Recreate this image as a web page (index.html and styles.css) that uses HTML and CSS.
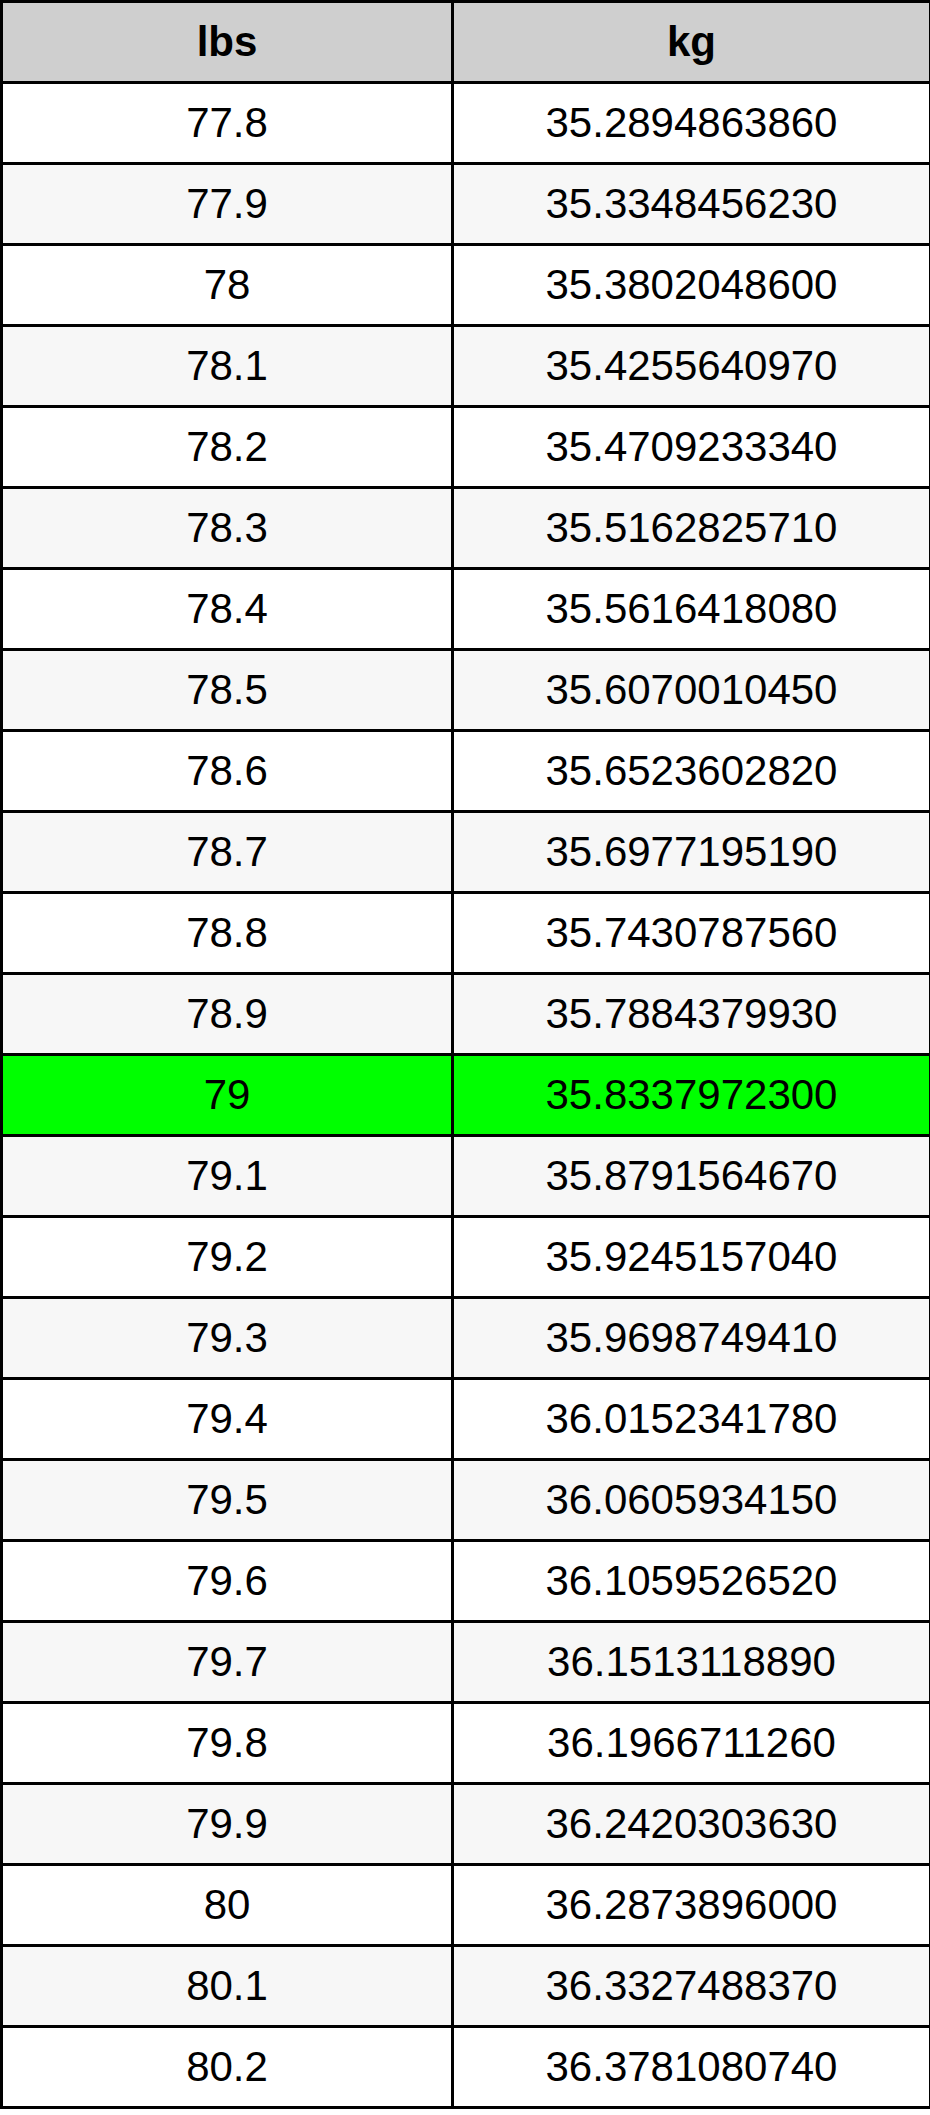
FILE: index.html
```html
<!DOCTYPE html>
<html>
<head>
<meta charset="utf-8">
<link rel="stylesheet" href="styles.css">
</head>
<body>
<table class="conv">
<colgroup><col class="c1"><col class="c2"></colgroup>
<thead>
<tr><th>lbs</th><th>kg</th></tr>
</thead>
<tbody>
<tr><td>77.8</td><td>35.2894863860</td></tr>
<tr class="alt"><td>77.9</td><td>35.3348456230</td></tr>
<tr><td>78</td><td>35.3802048600</td></tr>
<tr class="alt"><td>78.1</td><td>35.4255640970</td></tr>
<tr><td>78.2</td><td>35.4709233340</td></tr>
<tr class="alt"><td>78.3</td><td>35.5162825710</td></tr>
<tr><td>78.4</td><td>35.5616418080</td></tr>
<tr class="alt"><td>78.5</td><td>35.6070010450</td></tr>
<tr><td>78.6</td><td>35.6523602820</td></tr>
<tr class="alt"><td>78.7</td><td>35.6977195190</td></tr>
<tr><td>78.8</td><td>35.7430787560</td></tr>
<tr class="alt"><td>78.9</td><td>35.7884379930</td></tr>
<tr class="hl"><td>79</td><td>35.8337972300</td></tr>
<tr class="alt"><td>79.1</td><td>35.8791564670</td></tr>
<tr><td>79.2</td><td>35.9245157040</td></tr>
<tr class="alt"><td>79.3</td><td>35.9698749410</td></tr>
<tr><td>79.4</td><td>36.0152341780</td></tr>
<tr class="alt"><td>79.5</td><td>36.0605934150</td></tr>
<tr><td>79.6</td><td>36.1059526520</td></tr>
<tr class="alt"><td>79.7</td><td>36.1513118890</td></tr>
<tr><td>79.8</td><td>36.1966711260</td></tr>
<tr class="alt"><td>79.9</td><td>36.2420303630</td></tr>
<tr><td>80</td><td>36.2873896000</td></tr>
<tr class="alt"><td>80.1</td><td>36.3327488370</td></tr>
<tr><td>80.2</td><td>36.3781080740</td></tr>
</tbody>
</table>
</body>
</html>
```

FILE: styles.css
```css
html, body {
  margin: 0;
  padding: 0;
  background: #ffffff;
}

.conv {
  border-collapse: collapse;
  table-layout: fixed;
  width: 929px;
  font-family: "Liberation Sans", Arial, sans-serif;
  font-size: 42px;
  color: #000000;
}

.conv .c1 { width: 451px; }
.conv .c2 { width: 478px; }

.conv th,
.conv td {
  border: 3px solid #000000;
  height: 78px;
  padding: 0;
  text-align: center;
  vertical-align: middle;
  line-height: 1;
}

.conv th {
  background: #cfcfcf;
  font-weight: bold;
}

.conv tr.alt td {
  background: #f7f7f7;
}

.conv tr.hl td {
  background: #00ff00;
}
```
